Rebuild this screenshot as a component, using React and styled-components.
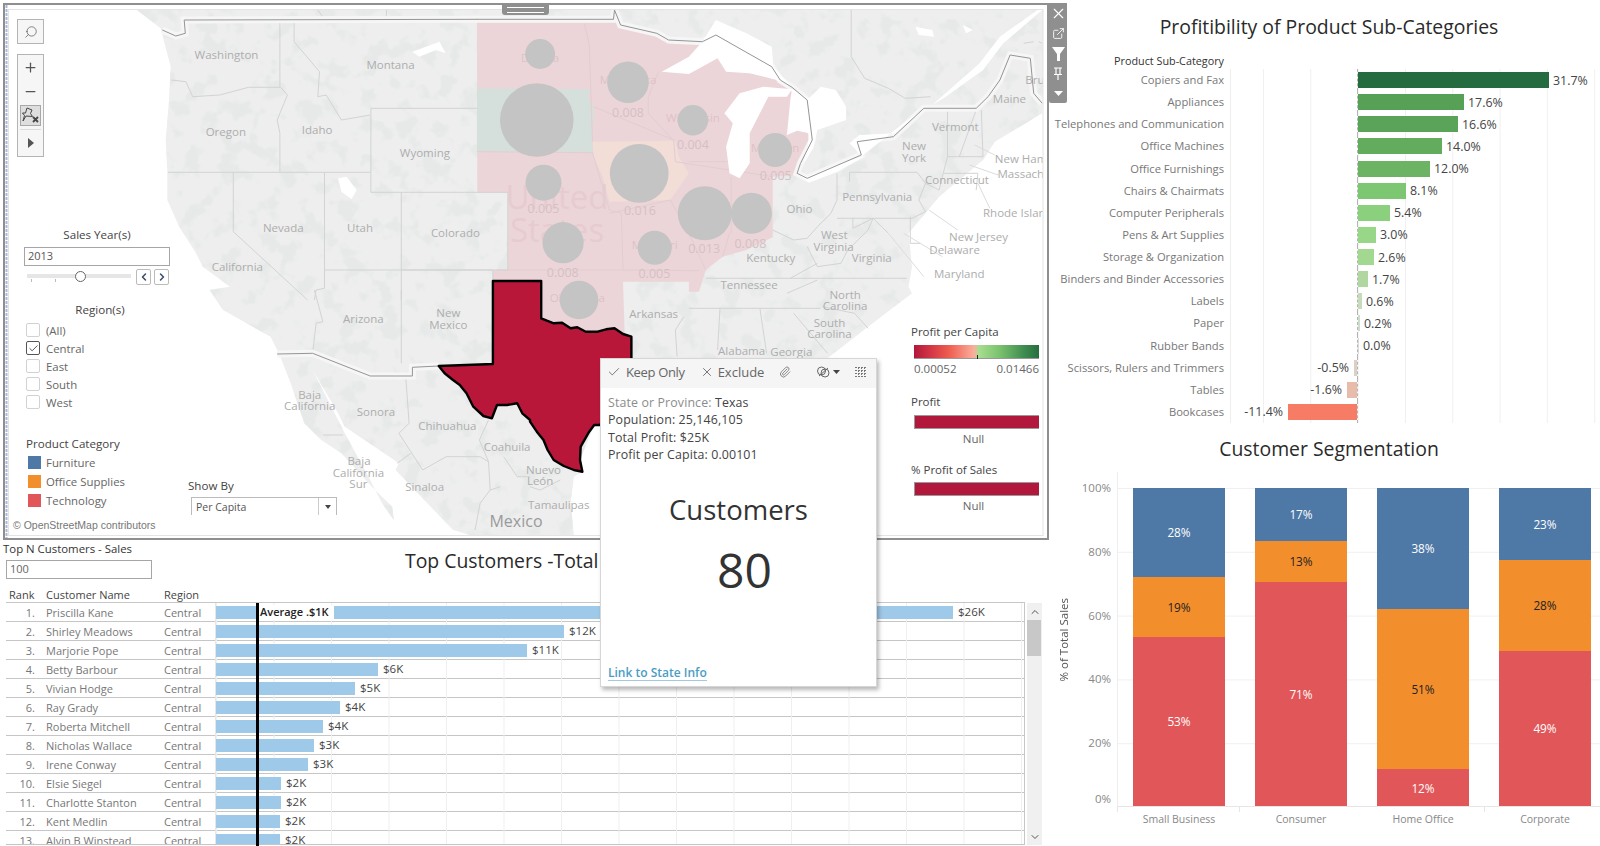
import React from "react";
import styled, { createGlobalStyle } from "styled-components";
import { Search, Plus, Minus, ChevronLeft, ChevronRight, ChevronUp, ChevronDown, Check, X, Paperclip, ExternalLink } from "lucide-react";

const FONT = `"Open Sans", "Noto Sans", "Liberation Sans", sans-serif`;

const Global = createGlobalStyle`
  html, body { margin: 0; padding: 0; background: #fff; }
  body { font-family: ${FONT}; overflow: hidden; }
  * { box-sizing: border-box; }
`;

/* map drawing helpers: pts are authored as crops of the map sheet */
const Z = (ox, oy, s) =>
  s.trim().split(/\s+/).map((p) => {
    const [x, y] = p.split(",").map(Number);
    return `${(ox + x / 2.958).toFixed(1)},${(oy + y / 3).toFixed(1)}`;
  }).join(" ");
const A = (s) => Z(0, 0, s);
const B = (s) => Z(530, 0, s);
const C = (s) => Z(0, 290, s);
const D = (s) => Z(530, 290, s);

const LAND = [
  A("405,30 475,85 505,200 500,300 490,420 495,515 495,600 530,680 580,760 600,800 680,860"),
  C("620,0 660,60 800,140 825,190 860,280 900,400 950,450 1010,490 1100,590 1160,650 1165,690 1130,640 1090,560 1020,430 960,310 925,240 1000,370 1020,410 1180,520 1170,540 1340,720 1390,735 1568,735"),
  D("130,735 120,640 130,560 155,545 148,510 190,405 300,358 880,205 1000,110 1130,10"),
  B("1120,860 1130,800 1120,700 1170,640 1210,590 1340,480 1375,425 1515,340 1530,30"),
].join(" ");

const PINK = [
  B("-157,58 247,58 250,30 268,75 375,100 410,120 510,125 550,105 715,200 740,240 775,262 820,300 835,420 800,490 790,525 718,530 718,712 640,750 570,770 520,810 500,875 470,875 470,845 275,845"),
  D("280,135 30,135"),
  A("1458,845 1458,810 1502,810 1502,578 1412,578"),
].join(" ");

const SD = B("-157,265 180,268 172,290 188,320 185,470 170,455 -157,455");
const IOWA = B("185,425 430,422 440,470 470,520 415,600 235,605 215,530 188,470");

const TEXAS = [
  C("1458,-27"),
  D("33,-27 33,85 50,92 70,100 95,98 120,115 140,112 165,125 200,125 225,118 250,115 275,132 300,140 300,250 207,405 190,405 175,425 150,470 148,510 155,545 130,540 100,528 70,510 52,480 40,450 20,425 0,395"),
  C("1568,390 1545,370 1530,340 1500,345 1470,345 1455,385 1430,378 1400,350 1380,310 1360,285 1340,270 1315,250 1298,228 1458,222"),
].join(" ");

const LAKES = [
  B("390,215 470,170 510,125 550,60 640,100 715,140 720,200 775,262 730,240 650,220 580,215 555,175 470,222"),
  B("620,280 690,260 775,268 760,290 705,290 680,340 650,400 650,490 620,535 590,520 580,440 600,370 575,340"),
  B("775,268 825,295 860,260 905,270 935,320 935,360 850,390 838,445 808,492 822,440 826,400 790,392 760,405 770,300"),
  B("790,520 825,548 910,515 985,472 945,430 975,405 1080,400 1170,320 1180,315 1085,385 980,470 905,495 820,530"),
  A("1000,535 1025,530 1055,570 1040,598 1010,575"),
  A("1220,155 1300,125 1318,160 1290,150 1240,170"),
  B("1515,30 1400,130 1340,210 1230,290 1190,315 1240,270 1330,190 1390,110 1515,20"),
  B("1140,80 1190,90 1195,110 1150,105"), B("1280,75 1310,90 1290,100"),
];

const BORDERS = [
  A("480,90 520,108 548,100 545,60 1412,58"),
  B("-157,58 247,58 250,30 268,75 375,100 410,120 510,125 550,105 715,200 740,240 775,262 820,300 835,420 800,490 790,520 820,535 980,465 968,425 1075,410 1165,325 1320,325 1355,290 1390,240 1420,165 1480,175 1490,280 1515,310"),
  C("820,192 925,190 1095,258 1220,258 1220,232 1298,228"),
];

const LINES = [
  A("507,240 550,245 570,290 650,285 735,262 830,262 850,285 820,360 828,400 828,515"),
  A("828,60 828,262"), A("497,517 1097,517"), A("940,30 960,58"), A("1143,30 1143,58"),
  A("870,60 870,125 945,215 940,290 965,285 1010,360 1095,345"),
  A("1097,325 1412,325"), A("1097,325 1097,577 1502,577 1502,810 960,810"),
  A("1187,577 1187,900"), A("960,517 960,865 935,870 930,900"),
  A("690,517 690,695 910,900"), C("1187,0 1187,220"), C("925,190 935,100 955,95 930,0"),
  A("1190,810 1458,810 1458,900"),
  C("1200,258 1210,400 1180,430 1215,485 1250,540 1320,500 1420,500 1445,515 1450,600 1480,590"),
  C("1445,390 1418,450 1445,515"), C("1175,520 1215,490"), C("955,435 1015,435"),
  C("1450,600 1420,640 1405,720"), C("1490,500 1530,560 1568,560"),
  B("718,690 780,720 820,715 850,680 890,640 908,600 908,520"),
  B("945,545 945,517 1145,517 1170,550 1150,600 1170,635 1130,655 908,655"),
  B("820,740 850,800 920,790 940,750 1000,690 1015,655 1040,680 1060,700"),
  B("850,790 770,835"), B("520,835 1115,835"), B("850,840 760,880"),
  B("955,655 955,685 1015,655"), B("1125,650 1125,730 1155,730"),
  B("1235,325 1235,470 1340,470 1335,330"), B("1270,470 1320,330"),
  B("1225,520 1325,520 1320,570"), B("1170,550 1210,570 1220,530 1235,470"),
  B("950,30 950,170 990,235 1060,265 1110,295 1185,290"),
  D("470,55 860,55"), D("562,55 555,180"), D("680,55 700,190"), D("780,70 880,190"), D("865,50 960,70 1000,115"),
  D("455,80 430,120 435,200"), D("120,170 90,230"), D("0,590 30,600 90,570"),
  B("1460,130 1490,125"), B("1505,125 1515,130"),
];

const CALLOUTS = [
  B("1180,630 1265,690"), B("1060,700 1165,830"), B("1105,700 1220,770"),
  B("1325,550 1360,625"), B("1315,435 1375,465"), B("1300,495 1385,525"),
];

const INNER = [
  B("188,320 425,420 430,485 718,530"), B("160,70 175,130 185,425"), B("350,290 380,215"),
  B("425,422 350,340 350,290"), B("470,485 585,485"), B("595,530 595,700"), B("415,600 470,700 520,810"),
  B("-157,455 185,458 235,630 270,640 275,810 -100,810"), B("235,640 415,600"), B("275,810 500,812"),
  B("590,700 570,770"),
];

const CIRCLES = [
  [B("30,162"), 15], [B("290,247"), 20.8], [B("20,360"), 36.8], [B("482,361"), 15.3], [B("725,450"), 17],
  [B("323,520"), 29.4], [B("40,548"), 18], [B("517,640"), 27], [B("655,640"), 20.5], [B("98,728"), 20.6],
  [B("369,743"), 17], [D("145,30"), 19.3],
];

const pos = (s) => s.split(",").map(Number);

const LABELS = [
  [A("670,170"), "Washington"], [A("1155,200"), "Montana"], [A("668,400"), "Oregon"], [A("938,393"), "Idaho"],
  [A("1257,463"), "Wyoming"], [A("838,688"), "Nevada"], [A("1065,688"), "Utah"], [A("1347,703"), "Colorado"],
  [A("702,805"), "California"], [B("797,630"), "Ohio"], [B("1027,595"), "Pennsylvania"], [B("900,710"), "West"],
  [B("898,745"), "Virginia"], [B("712,777"), "Kentucky"], [B("1011,778"), "Virginia"], [B("1258,386"), "Vermont"],
  [B("1136,443"), "New"], [B("1136,477"), "York"], [B("1263,543"), "Connecticut"],
  [B("1327,715"), "New Jersey"], [B("1256,754"), "Delaware"], [B("1270,826"), "Maryland"], [B("1418,300"), "Maine"],
  [D("648,-10"), "Tennessee"], [D("932,18"), "North"], [D("932,52"), "Carolina"], [D("886,102"), "South"], [D("886,136"), "Carolina"],
  [D("773,190"), "Georgia"], [D("626,187"), "Alabama"], [D("366,77"), "Arkansas"], [C("1075,92"), "Arizona"],
  [C("1326,73"), "New"], [C("1326,108"), "Mexico"], [C("916,320"), "Baja"], [C("916,352"), "California"],
  [C("1112,371"), "Sonora"], [C("1323,413"), "Chihuahua"], [C("1500,475"), "Coahuila"], [C("1062,518"), "Baja"],
  [C("1060,552"), "California"], [C("1060,585"), "Sur"], [C("1256,595"), "Sinaloa"], [D("40,545"), "Nuevo"],
  [D("30,577"), "León"], [D("85,648"), "Tamaulipas"],
];

const CLIPPED_LABELS = [
  [B("1375,480"), "New Hampshire"], [B("1383,526"), "Massachusetts"], [B("1340,642"), "Rhode Island"], [B("1465,245"), "Brunswick"],
];

const PINK_LABELS = [
  [B("290,252"), "Minnesota"], [B("482,366"), "Wisconsin"], [B("725,455"), "Michigan"], [B("369,748"), "Missouri"],
  [D("140,35"), "Oklahoma"], [B("30,185"), "Dakota"],
];
const VALUES = [
  [B("290,350"), "0.008"], [B("482,447"), "0.004"], [B("727,540"), "0.005"], [B("40,640"), "0.005"],
  [B("325,645"), "0.016"], [B("515,760"), "0.013"], [B("652,745"), "0.008"], [B("97,830"), "0.008"], [B("368,833"), "0.005"],
];

const LeftCol = styled.div`position: relative; width: 1050px; height: 846px; flex: none;`;
const Page = styled.div`display: flex; width: 1600px; height: 846px; overflow: hidden; background: #fff; color: #555;`;

const MapPanel = styled.section`
  position: relative; margin: 3px 0 0 3px; width: 1046px; height: 537px; border: 2px solid #8f8f8f;
  background: #fff;
`;
const MapSvg = styled.svg`position: absolute; inset: 0; width: 100%; height: 100%; display: block;`;
const MapLabel = styled.text`
  font-family: ${FONT}; font-size: ${(p) => p.$size || 11.5}px; fill: ${(p) => p.$fill || "#adadad"}; text-anchor: ${(p) => (p.$start ? "start" : "middle")};
`;

const Handle = styled.div`
  position: absolute; top: -2px; left: 497px; width: 47px; height: 12px; background: #8f8f8f; border-radius: 0 0 3px 3px;
  &::after { content: ""; position: absolute; left: 5px; right: 5px; top: 4px; height: 4px; border-top: 1px solid #fff; border-bottom: 1px solid #fff; }
`;
const SideTools = styled.div`
  position: absolute; left: 100%; margin-left: 2px; top: -2px; width: 18px; height: 100px; background: #8f8f8f; border-radius: 0 0 2px 2px;
  display: flex; flex-direction: column; align-items: center; padding-top: 3px; gap: 5px; color: #fff;
`;
const ToolSlot = styled.span`display: flex; height: 15px; align-items: center; justify-content: center;`;

const ControlStack = styled.div`position: absolute; left: 12px; top: 14px; width: 27px; display: flex; flex-direction: column; gap: 10px;`;
const ControlBox = styled.div`
  width: 27px; background: #f6f6f6; border: 1px solid #b4b4b4; display: flex; flex-direction: column; align-items: center; color: #555;
`;
const ControlBtn = styled.span`
  display: flex; align-items: center; justify-content: center; width: 21px; height: ${(p) => p.$h || 23}px;
  ${(p) => p.$active && "background:#dedede; border:1px solid #a8a8a8; margin: 3px 0;"}
  ${(p) => p.$rule && "border-top:1px solid #ddd;"}
`;

const FilterRail = styled.div`position: absolute; left: 19px; top: 223px; width: 146px; display: flex; flex-direction: column;`;
const FilterTitle = styled.div`
  font-size: 11.6px; line-height: 14px; color: #444; text-align: ${(p) => p.$align || "center"}; ${(p) => p.$pad && `padding-left:${p.$pad}px;`}
`;
const TextBox = styled.div`
  height: 19px; border: 1px solid #a6a6a6; background: #fff; font-size: 11px; line-height: 16px; padding-left: 3px; color: #555; overflow: hidden;
`;
const SliderRow = styled.div`display: flex; align-items: flex-start; margin-top: 3px; height: 16px;`;
const Slider = styled.div`
  position: relative; margin: 5px 0 0 3px; width: 104px; height: 4px; background: #e6e6e6;
  &::before { content: ""; position: absolute; left: 4px; right: 28px; top: 5px; height: 3px;
    background-image: linear-gradient(90deg,#bbb 1px,transparent 1px); background-size: 24px 100%; }
  &::after { content: ""; position: absolute; left: 48px; top: -3px; width: 9px; height: 9px; border-radius: 50%; background: #fff; border: 1px solid #666; }
`;
const StepBtn = styled.span`
  width: 15px; height: 16px; border: 1px solid #bbb; border-radius: 2px; display: flex; align-items: center; justify-content: center; color: #3c4c68; margin-left: ${(p) => p.$gap}px; background: #fff;
`;
const RegionList = styled.div`display: flex; flex-direction: column; margin-top: 4px; padding-left: 2px;`;
const RegionItem = styled.div`display: flex; align-items: center; height: 18px; font-size: 11.4px; color: #666; gap: 6px;`;
const CheckBoxMark = styled.span`
  width: 14px; height: 14px; flex: none; border-radius: 2px; border: 1px solid ${(p) => (p.$on ? "#555" : "#d2d2d2")}; background: #fff;
  display: flex; align-items: center; justify-content: center; color: #444;
`;
const LegendItem = styled.div`display: flex; align-items: center; height: 19px; font-size: 11.4px; color: #666; gap: 5px; padding-left: 4px;`;
const Swatch = styled.span`width: 13px; height: 13px; flex: none; background: ${(p) => p.$c};`;

const ShowBy = styled.div`position: absolute; left: 183px; top: 474px; width: 150px;`;
const SelectBox = styled.div`
  margin: 4px 0 0 3px; width: 146px; height: 18px; border: 1px solid #bbb; border-bottom: 0; background: #fff; display: flex; align-items: center; font-size: 10.5px; color: #555; padding-left: 4px;
`;
const SelectArrow = styled.span`
  margin-left: auto; width: 18px; height: 100%; border-left: 1px solid #ccc; display: flex; align-items: center; justify-content: center;
  &::after { content: ""; border: 3.5px solid transparent; border-top: 4px solid #444; margin-top: 4px; }
`;
const Credit = styled.div`position: absolute; left: 8px; top: 513px; font-family: "Liberation Sans", sans-serif; font-size: 10.5px; line-height: 14px; color: #777; background: #fff;`;

const LegendRail = styled.div`position: absolute; left: 904px; top: 320px; width: 135px; display: flex; flex-direction: column;`;
const LegendTitle = styled.div`font-size: 11.5px; line-height: 14px; color: #444; padding-left: 2px; margin-top: ${(p) => p.$mt || 0}px;`;
const RampBar = styled.div`
  position: relative; margin: ${(p) => p.$mt}px 0 0 5px; width: 125px; height: 14px; border-bottom: 1px solid #999;
  background: ${(p) => p.$ramp ? "linear-gradient(90deg,#b2173c 0%,#d63a45 15%,#ee5d50 28%,#fbae9c 48%,#a7dd90 52%,#7cc36f 68%,#3f8c50 88%,#256f3f 100%)" : "#b2183c"};
  ${(p) => !p.$ramp && "border: 1px solid #999; border-right:0;"}
`;
const RampTick = styled.span`position: absolute; left: 63px; bottom: -1px; width: 1px; height: 4px; background: #222;`;
const RampScale = styled.div`display: flex; justify-content: space-between; margin: 3px 0 0 5px; width: 125px; font-size: 11.5px; line-height: 14px; color: #666;`;
const NullText = styled.div`text-align: center; margin: 3px 0 0 5px; width: 119px; font-size: 11.5px; line-height: 14px; color: #666;`;

const Tooltip = styled.aside`
  position: absolute; z-index: 5; left: 600px; top: 358px; width: 277px; height: 329px; background: #fff; border: 1px solid #d6d6d6;
  box-shadow: 2px 3px 4px rgba(0,0,0,.28); display: flex; flex-direction: column;
`;
const TipBar = styled.div`height: 29px; flex: none; background: #f5f5f5; display: flex; align-items: center; color: #666; font-size: 13px; padding: 0 0 3px 6px;`;
const TipAction = styled.span`display: flex; align-items: center; gap: ${(p) => p.$gap || 3}px; margin-right: ${(p) => p.$mr || 0}px; letter-spacing: ${(p) => p.$ls || 0}px;`;
const TipBody = styled.div`padding: 6px 0 0 7px; font-size: 12.4px; letter-spacing: .12px; line-height: 17.3px; color: #444;`;
const Muted = styled.span`color: #8c8c8c;`;
const BigLabel = styled.div`margin-top: 29px; text-align: center; font-size: 27.5px; line-height: 36px; color: #333; font-weight: 500;`;
const BigValue = styled.div`margin-top: 12px; padding-left: 12px; text-align: center; font-size: 48px; line-height: 60px; color: #333;`;
const TipLink = styled.a`margin: auto 0 5px 7px; font-size: 12px; line-height: 15px; font-weight: 600; color: #4a9dc4; border-bottom: 1px solid #9fcbe0; align-self: flex-start;`;

const BottomHead = styled.div`display: flex; height: 45px; margin-top: 0;`;
const NBlock = styled.div`width: 405px; flex: none; display: flex; flex-direction: column;`;
const NTitle = styled.div`font-size: 11.4px; line-height: 18px; color: #333; padding-left: 3px;`;
const NInput = styled(TextBox)`margin: 2px 0 0 6px; width: 146px; color: #666;`;
const SheetTitle = styled.h2`
  margin: ${(p) => p.$mt || 0}px 0 0; font-size: 19.4px; font-weight: 500; line-height: 24px; color: #2a2a2a; white-space: nowrap; ${(p) => p.$center && "text-align:center; padding-left: 8px;"}
`;

const TableArea = styled.div`display: flex; height: 261px; padding-left: 6px;`;
const TableMain = styled.div`position: relative; width: 1019px; flex: none;`;
const Columns = "29px 11px 118px 52px 1fr";
const HeadRow = styled.div`display: grid; height: 18px; font-size: 11px; line-height: 20px; color: #444; border-bottom: 1px solid #c6c6c6; grid-template-columns: ${Columns};`;
const HeadCell = styled.span`white-space: nowrap; grid-column: ${(p) => p.$col}; ${(p) => p.$pad && `padding-left:${p.$pad}px;`}`;
const RowList = styled.div`height: 242px; overflow: hidden; border-bottom: 1px solid #c6c6c6; border-right: 1px solid #c6c6c6;`;
const Row = styled.div`display: grid; grid-template-columns: ${Columns}; height: 19px; border-bottom: 1px solid #c6c6c6; font-size: 11px; line-height: 20px; color: #777;`;
const RankCell = styled.span`grid-column: 1; text-align: right;`;
const NameCell = styled.span`grid-column: 3; white-space: nowrap;`;
const RegionCell = styled.span`grid-column: 4; border-right: 1px solid #e6e6e6;`;
const BarCell = styled.span`
  grid-column: 5; display: flex; align-items: flex-start; padding-top: 3px; font-size: 11.5px; line-height: 12px; color: #444;
  background-image: linear-gradient(90deg,#efefef 1px,transparent 1px);
  background-size: 57.5px 100%; background-position: 57.5px 0;
`;
const CustomerBar = styled.span`height: 13px; background: #9fc9e8; flex: none; margin-right: 5px;`;
const AverageLine = styled.div`position: absolute; left: 250px; top: 18px; bottom: 0; width: 3px; background: #000;`;
const AverageTag = styled.div`position: absolute; left: 253px; top: 20px; width: 75px; height: 15px; background: #fff; font-size: 11px; line-height: 14px; font-weight: 600; color: #222; padding-left: 1px; white-space: nowrap;`;
const ScrollTrack = styled.div`
  margin: 18px 0 0 2px; width: 15px; height: 242px; background: #f0f0f0; display: flex; flex-direction: column; align-items: center; color: #555;
`;
const ScrollEnd = styled.span`height: 17px; display: flex; align-items: center; flex: none;`;
const ScrollThumb = styled.span`width: 14px; height: 36px; background: #c8c8c8; margin-right: 1px; margin-bottom: auto;`;

const RightCol = styled.div`width: 550px; flex: none; display: flex; flex-direction: column;`;
const SubHead = styled.div`margin-top: 14px; width: 174px; text-align: right; font-size: 10.8px; line-height: 16px; font-weight: 500; color: #333; white-space: nowrap; height: 16px;`;
const SubList = styled.div`display: flex; flex-direction: column; height: 354px;`;
const SubRow = styled.div`display: grid; grid-template-columns: 174px 6px 127px 243px; height: 22.13px;`;
const SubLabel = styled.span`grid-column: 1; text-align: right; font-size: 11.2px; line-height: 22px; color: #777; white-space: nowrap;`;
const NegSide = styled.span`
  grid-column: 3; display: flex; justify-content: flex-end; align-items: center; font-size: 12.4px; color: #444; border-left: 1px solid #eee;
  background-image: linear-gradient(90deg,#f0f0f0 1px,transparent 1px); background-size: 47.3px 100%; background-position: 32px 0;
`;
const PosSide = styled.span`
  grid-column: 4; display: flex; align-items: center; font-size: 12.4px; color: #444; border-left: 1px dashed #b4b4b4;
  background-image: linear-gradient(90deg,#f0f0f0 1px,transparent 1px); background-size: 47.3px 100%; background-position: 47px 0;
`;
const ProfitBar = styled.span`height: 16px; flex: none; background: ${(p) => p.$c}; margin: ${(p) => p.$neg ? "0 0 0 5px" : "0 4px 0 0"};`;

const SegBody = styled.div`display: flex; height: 335px; margin-top: 11px;`;
const AxisTitle = styled.div`
  width: 25px; flex: none; display: flex; align-items: center; justify-content: flex-end; padding-right: 4px;
`;
const AxisText = styled.span`writing-mode: vertical-rl; transform: rotate(180deg); font-size: 11.5px; line-height: 14px; color: #555; white-space: nowrap;`;
const TickCol = styled.div`width: 36px; flex: none; padding-top: 8px; display: flex; flex-direction: column; text-align: right; font-size: 11.5px; color: #888;`;
const Tick = styled.span`height: 63.8px; line-height: 16px; flex: none; ${(p) => p.$raise && "margin-top:-8px;"}`;
const Plot = styled.div`
  margin-left: 6px; width: 483px; border-left: 1px solid #eee; border-bottom: 1px solid #e6e6e6; padding: 16px 0 0 15px; display: flex; gap: 30px;
  background-image: linear-gradient(#f0f0f0 1px,transparent 1px); background-size: 100% 63.8px; background-position: 0 16px;
`;
const Stack = styled.div`width: 92px; flex: none; display: flex; flex-direction: column;`;
const Segment = styled.div`
  height: ${(p) => p.$h}px; background: ${(p) => p.$c}; display: flex; align-items: center; justify-content: center; font-size: 11.8px; color: ${(p) => p.$dark ? "#222" : "#fff"};
`;
const XRow = styled.div`
  display: flex; gap: 30px; padding-left: 83px; height: 24px;
  background: linear-gradient(#e6e6e6,#e6e6e6) 67px 0 / 1px 5px no-repeat, linear-gradient(#e6e6e6,#e6e6e6) 189px 0 / 1px 5px no-repeat, linear-gradient(#e6e6e6,#e6e6e6) 434px 0 / 1px 5px no-repeat;
`;
const XLabel = styled.span`width: 92px; flex: none; text-align: center; font-size: 10.5px; line-height: 24px; color: #888; white-space: nowrap;`;

const customers = [
  ["Priscilla Kane", 737, "$26K"], ["Shirley Meadows", 348, "$12K"], ["Marjorie Pope", 311, "$11K"], ["Betty Barbour", 162, "$6K"],
  ["Vivian Hodge", 139, "$5K"], ["Ray Grady", 124, "$4K"], ["Roberta Mitchell", 107, "$4K"], ["Nicholas Wallace", 98, "$3K"],
  ["Irene Conway", 92, "$3K"], ["Elsie Siegel", 65, "$2K"], ["Charlotte Stanton", 65, "$2K"], ["Kent Medlin", 64, "$2K"], ["Alvin B Winstead", 64, "$2K"],
];
const subCats = [
  ["Copiers and Fax", 191, "31.7%", "#246b3f"], ["Appliances", 106, "17.6%", "#57a156"], ["Telephones and Communication", 100, "16.6%", "#5aa45a"],
  ["Office Machines", 84, "14.0%", "#63ab5d"], ["Office Furnishings", 72, "12.0%", "#6cb363"], ["Chairs & Chairmats", 48, "8.1%", "#7dc772"],
  ["Computer Peripherals", 32, "5.4%", "#8ad07d"], ["Pens & Art Supplies", 18, "3.0%", "#98d787"], ["Storage & Organization", 16, "2.6%", "#a3d890"],
  ["Binders and Binder Accessories", 10, "1.7%", "#b0d7a0"], ["Labels", 4, "0.6%", "#c7dabc"], ["Paper", 2, "0.2%", "#d0dccb"], ["Rubber Bands", 1, "0.0%", "#d8dbd8"],
  ["Scissors, Rulers and Trimmers", -3, "-0.5%", "#dbd0c5"], ["Tables", -10, "-1.6%", "#e8bcaa"], ["Bookcases", -69, "-11.4%", "#f67c66"],
];
const BLUE = "#4e78a6", ORANGE = "#f28e2c", RED = "#e15759";
const segments = [
  ["Small Business", [89, "28%"], [60, "19%"], [170, "53%"]],
  ["Consumer", [53, "17%"], [41, "13%"], [225, "71%"]],
  ["Home Office", [121, "38%"], [161, "51%"], [37, "12%"]],
  ["Corporate", [72, "23%"], [91, "28%"], [156, "49%"]],
];

function MapDrawing() {
  return (
    <MapSvg viewBox="5 5 1042 533" preserveAspectRatio="none">
      <defs>
        <clipPath id="landClip"><polygon points={LAND} /></clipPath>
        <clipPath id="frameClip"><rect x="9" y="10" width="1034" height="525" /></clipPath>
        <filter id="terrain" x="0" y="0" width="100%" height="100%" colorInterpolationFilters="sRGB">
          <feTurbulence type="fractalNoise" baseFrequency="0.05" numOctaves="3" seed="7" />
          <feColorMatrix values="0 0 0 0 .905  0 0 0 0 .915  0 0 0 0 .915  7 0 0 0 -3.6" />
        </filter>
      </defs>
      <g clipPath="url(#frameClip)">
        <polygon points={LAND} fill="#eeeeee" />
        <g clipPath="url(#landClip)">
          <rect x="9" y="10" width="1034" height="525" filter="url(#terrain)" />
        </g>
        <polygon points={PINK} fill="#ecd5d8" />
        <polygon points={SD} fill="#d5dfdb" />
        <polygon points={IOWA} fill="#f2ddd7" />
        {INNER.map((p, i) => <polyline key={i} points={p} fill="none" stroke="#e3cdd1" />)}
        {LINES.map((p, i) => <polyline key={i} points={p} fill="none" stroke="#d2d3d3" />)}
        {CALLOUTS.map((p, i) => <polyline key={i} points={p} fill="none" stroke="#dcdcdc" />)}
        {BORDERS.map((p, i) => <polyline key={i} points={p} fill="none" stroke="#f6f6f6" strokeWidth="7" />)}
        {LAKES.map((p, i) => <polygon key={i} points={p} fill="#fff" />)}
        {BORDERS.map((p, i) => <polyline key={i} points={p} fill="none" stroke="#959595" strokeWidth="1" />)}
        <MapLabel x="557" y="209" $size={33} $fill="#e6ccd1">United</MapLabel>
        <MapLabel x="557" y="242" $size={33} $fill="#e6ccd1">States</MapLabel>
        {PINK_LABELS.map(([p, t]) => <MapLabel key={t} x={pos(p)[0]} y={pos(p)[1]} $fill="#dcc2c7">{t}</MapLabel>)}
        {CIRCLES.map(([p, r]) => <circle key={p} cx={pos(p)[0]} cy={pos(p)[1]} r={r} fill="#c4c4c4" />)}
        {VALUES.map(([p, t], i) => <MapLabel key={i} x={pos(p)[0]} y={pos(p)[1]} $size={12.5} $fill="#d6c0c4">{t}</MapLabel>)}
        {LABELS.map(([p, t], i) => <MapLabel key={i} x={pos(p)[0]} y={pos(p)[1] + 2.5}>{t}</MapLabel>)}
        {CLIPPED_LABELS.map(([p, t]) => <MapLabel key={t} $start x={pos(p)[0]} y={pos(p)[1] + 2.5}>{t}</MapLabel>)}
        <MapLabel x="516" y="527" $size={16} $fill="#9a9a9a">Mexico</MapLabel>
        <polygon points={TEXAS} fill="#b8173a" stroke="#000" strokeWidth="2.4" strokeLinejoin="round" />
      </g>
      <rect x="8.5" y="9.5" width="1034.5" height="526" fill="none" stroke="#e4e4e4" />
      <line x1="6.5" y1="5" x2="6.5" y2="538" stroke="#a9b8d8" strokeWidth="2" strokeDasharray="3 1" />
    </MapSvg>
  );
}

const PinIcon = () => (
  <svg width="19" height="17" viewBox="0 0 19 17" fill="none" stroke="#444" strokeWidth="1">
    <path d="M6 1l5 2-1.500 3.500 2 3-6.500-.5-3 5 1.500-5.500L1.500 6l3 0z" />
    <path d="M12 10l5 5M17 10l-5 5" strokeWidth="1.800" />
  </svg>
);
const GroupIcon = () => (
  <svg width="13" height="12" viewBox="0 0 13 12" fill="none" stroke="#666">
    <circle cx="4.500" cy="5" r="4" /><circle cx="8" cy="7" r="4" /><path d="M2 10l9-8" />
  </svg>
);
const GridIcon = () => (
  <svg width="12" height="10" viewBox="0 0 12 10" stroke="#777" fill="none">
    <path d="M0 .5h12M0 3.500h12M0 6.500h12M0 9.500h12M3.500 0v10M6.500 0v10M9.500 0v10" strokeDasharray="2 1" />
  </svg>
);
const PinTool = () => (
  <svg width="10" height="13" viewBox="0 0 10 13" fill="none" stroke="#fff" strokeWidth="1.200">
    <path d="M1 1h8M3 1v6M7 1v6M1 7.500h8M5 8v5" />
  </svg>
);

export default function App() {
  return (
    <Page>
      <Global />
      <LeftCol>
        <MapPanel>
          <MapDrawing />
          <Handle />
          <SideTools>
            <ToolSlot><X size={17} strokeWidth={1.6} /></ToolSlot>
            <ToolSlot><ExternalLink size={13} strokeWidth={1.6} /></ToolSlot>
            <ToolSlot><svg width="13" height="14" viewBox="0 0 13 14"><path d="M0 0h13L8 7v7H5V7z" fill="#fff" /></svg></ToolSlot>
            <ToolSlot><PinTool /></ToolSlot>
            <ToolSlot><svg width="9" height="5" viewBox="0 0 9 5"><path d="M0 0h9L4.500 5z" fill="#fff" /></svg></ToolSlot>
          </SideTools>
          <ControlStack>
            <ControlBox>
              <ControlBtn $h={23}><Search size={14} strokeWidth={1.2} style={{ transform: "scaleX(-1)" }} /></ControlBtn>
            </ControlBox>
            <ControlBox>
              <ControlBtn $h={25}><Plus size={15} strokeWidth={2} /></ControlBtn>
              <ControlBtn $h={22}><Minus size={15} strokeWidth={2} /></ControlBtn>
              <ControlBtn $active $h={21}><PinIcon /></ControlBtn>
              <ControlBtn $rule $h={27} ><svg width="6" height="10" viewBox="0 0 6 10"><path d="M0 0l6 5-6 5z" fill="#555" /></svg></ControlBtn>
            </ControlBox>
          </ControlStack>
          <FilterRail>
            <FilterTitle>Sales Year(s)</FilterTitle>
            <TextBox style={{ marginTop: 5 }}>2013</TextBox>
            <SliderRow>
              <Slider />
              <StepBtn $gap={5}><ChevronLeft size={12} strokeWidth={3} /></StepBtn>
              <StepBtn $gap={3}><ChevronRight size={12} strokeWidth={3} /></StepBtn>
            </SliderRow>
            <FilterTitle $pad={6} style={{ marginTop: 18 }}>Region(s)</FilterTitle>
            <RegionList>
              {["(All)", "Central", "East", "South", "West"].map((r) => (
                <RegionItem key={r}>
                  <CheckBoxMark $on={r === "Central"}>{r === "Central" && <Check size={11} strokeWidth={2} />}</CheckBoxMark>
                  {r}
                </RegionItem>
              ))}
            </RegionList>
            <FilterTitle $align="left" $pad={2} style={{ marginTop: 26, marginBottom: 2 }}>Product Category</FilterTitle>
            <LegendItem><Swatch $c={BLUE} />Furniture</LegendItem>
            <LegendItem><Swatch $c={ORANGE} />Office Supplies</LegendItem>
            <LegendItem><Swatch $c={RED} />Technology</LegendItem>
          </FilterRail>
          <ShowBy>
            <FilterTitle $align="left">Show By</FilterTitle>
            <SelectBox>Per Capita<SelectArrow /></SelectBox>
          </ShowBy>
          <Credit>© OpenStreetMap contributors</Credit>
          <LegendRail>
            <LegendTitle>Profit per Capita</LegendTitle>
            <RampBar $ramp $mt={6}><RampTick /></RampBar>
            <RampScale><span>0.00052</span><span>0.01466</span></RampScale>
            <LegendTitle $mt={19}>Profit</LegendTitle>
            <RampBar $mt={6} />
            <NullText>Null</NullText>
            <LegendTitle $mt={17}>% Profit of Sales</LegendTitle>
            <RampBar $mt={5} />
            <NullText>Null</NullText>
          </LegendRail>
        </MapPanel>
        <BottomHead>
          <NBlock>
            <NTitle>Top N Customers - Sales</NTitle>
            <NInput>100</NInput>
          </NBlock>
          <SheetTitle $mt={9}>Top Customers -Total Sales</SheetTitle>
        </BottomHead>
        <TableArea>
          <TableMain>
            <HeadRow>
              <HeadCell $col="1 / 3" $pad={3}>Rank</HeadCell>
              <HeadCell $col={3}>Customer Name</HeadCell>
              <HeadCell $col={4}>Region</HeadCell>
            </HeadRow>
            <RowList>
              {customers.map(([name, w, v], i) => (
                <Row key={name}>
                  <RankCell>{i + 1}.</RankCell>
                  <NameCell>{name}</NameCell>
                  <RegionCell>Central</RegionCell>
                  <BarCell>
                    <CustomerBar style={{ width: w }} />
                    {v}
                  </BarCell>
                </Row>
              ))}
            </RowList>
            <AverageLine />
            <AverageTag>Average .$1K</AverageTag>
          </TableMain>
          <ScrollTrack>
            <ScrollEnd><ChevronUp size={12} strokeWidth={2} /></ScrollEnd>
            <ScrollThumb />
            <ScrollEnd><ChevronDown size={12} strokeWidth={2} /></ScrollEnd>
          </ScrollTrack>
        </TableArea>
        <Tooltip>
          <TipBar>
            <TipAction $mr={15} $gap={5} $ls={-0.35}><Check size={14} strokeWidth={1.5} />Keep Only</TipAction>
            <TipAction $mr={15} $gap={4}><X size={14} strokeWidth={1.5} />Exclude</TipAction>
            <TipAction $mr={26}><Paperclip size={12} strokeWidth={1.5} /></TipAction>
            <TipAction $mr={15}><GroupIcon /><svg width="7" height="4" viewBox="0 0 7 4"><path d="M0 0h7L3.500 4z" fill="#444" /></svg></TipAction>
            <TipAction><GridIcon /></TipAction>
          </TipBar>
          <TipBody>
            <div><Muted>State or Province:</Muted> Texas</div>
            <div>Population: 25,146,105</div>
            <div>Total Profit: $25K</div>
            <div>Profit per Capita: 0.00101</div>
          </TipBody>
          <BigLabel>Customers</BigLabel>
          <BigValue>80</BigValue>
          <TipLink>Link to State Info</TipLink>
        </Tooltip>
      </LeftCol>
      <RightCol>
        <SheetTitle $center $mt={15}>Profitibility of Product Sub-Categories</SheetTitle>
        <SubHead>Product Sub-Category</SubHead>
        <SubList>
          {subCats.map(([label, w, v, c]) => (
            <SubRow key={label}>
              <SubLabel>{label}</SubLabel>
              <NegSide>
                {w < 0 && v}
                {w < 0 && <ProfitBar $neg $c={c} style={{ width: -w }} />}
              </NegSide>
              <PosSide>
                {w > 0 && <ProfitBar $c={c} style={{ width: w }} />}
                {w > 0 && v}
              </PosSide>
            </SubRow>
          ))}
        </SubList>
        <SheetTitle $center $mt={14}>Customer Segmentation</SheetTitle>
        <SegBody>
          <AxisTitle><AxisText>% of Total Sales</AxisText></AxisTitle>
          <TickCol>
            {["100%", "80%", "60%", "40%", "20%"].map((t) => <Tick key={t}>{t}</Tick>)}
            <Tick $raise>0%</Tick>
          </TickCol>
          <Plot>
            {segments.map(([name, b, o, r]) => (
              <Stack key={name}>
                <Segment $h={b[0]} $c={BLUE}>{b[1]}</Segment>
                <Segment $h={o[0]} $c={ORANGE} $dark>{o[1]}</Segment>
                <Segment $h={r[0]} $c={RED}>{r[1]}</Segment>
              </Stack>
            ))}
          </Plot>
        </SegBody>
        <XRow>
          {segments.map(([name]) => <XLabel key={name}>{name}</XLabel>)}
        </XRow>
      </RightCol>
    </Page>
  );
}
